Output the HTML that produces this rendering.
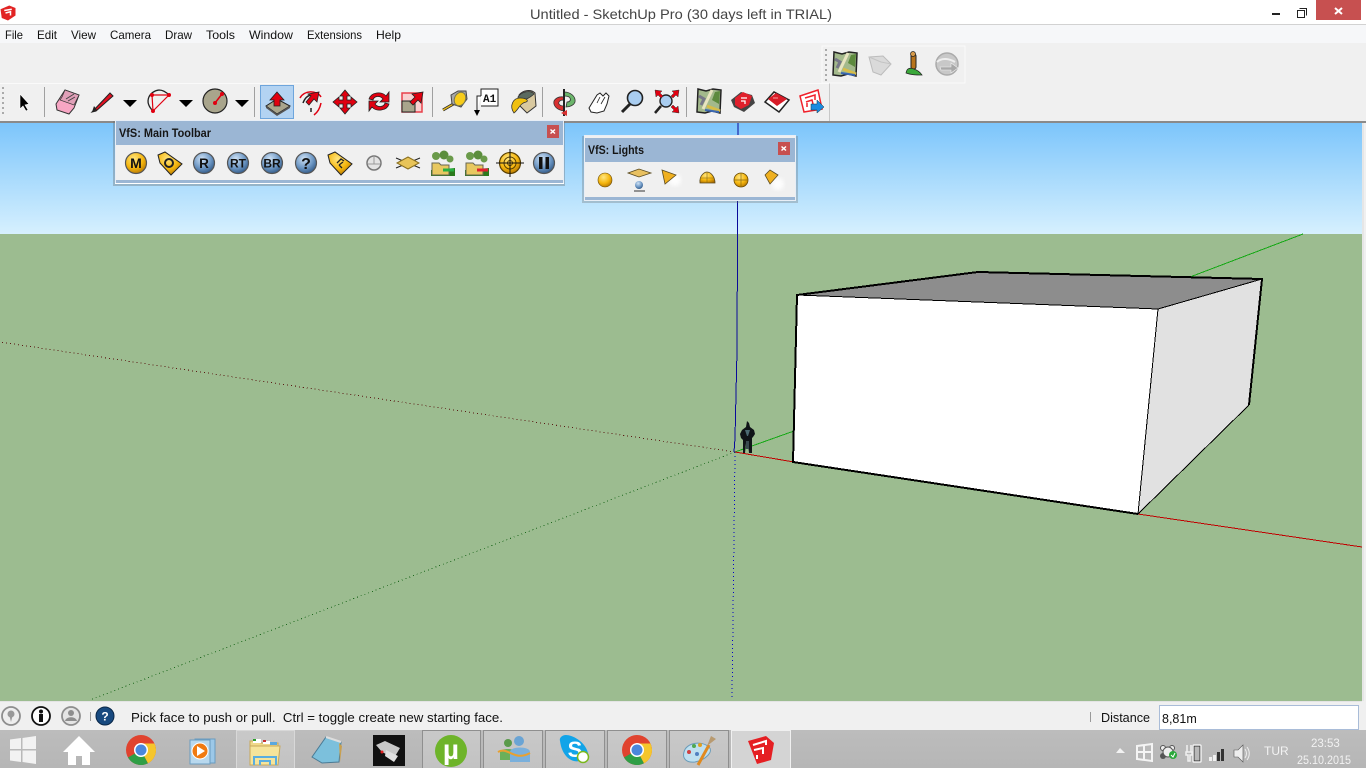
<!DOCTYPE html>
<html><head><meta charset="utf-8"><title>Untitled - SketchUp Pro</title>
<style>
html,body{margin:0;padding:0;width:1366px;height:768px;overflow:hidden;background:#f0f0f0}
svg{display:block;position:absolute;left:0;top:0}
text{font-family:"Liberation Sans",sans-serif}
</style></head><body>
<svg width="1366" height="768" viewBox="0 0 1366 768" xmlns="http://www.w3.org/2000/svg">
<defs>
<linearGradient id="sky" x1="0" y1="0" x2="0" y2="1"><stop offset="0" stop-color="#7cc5fb"/><stop offset="1" stop-color="#d6f0fe"/></linearGradient>
<radialGradient id="gold" cx=".4" cy=".3" r=".8"><stop offset="0" stop-color="#ffe680"/><stop offset=".55" stop-color="#f5b60e"/><stop offset="1" stop-color="#a96a00"/></radialGradient>
<radialGradient id="blue" cx=".4" cy=".3" r=".8"><stop offset="0" stop-color="#cfe2f5"/><stop offset=".55" stop-color="#6d97c4"/><stop offset="1" stop-color="#234a78"/></radialGradient>
<linearGradient id="tb" x1="0" y1="0" x2="0" y2="1"><stop offset="0" stop-color="#bcbcbc"/><stop offset="1" stop-color="#b6b6b6"/></linearGradient>
<linearGradient id="tbb" x1="0" y1="0" x2="0" y2="1"><stop offset="0" stop-color="#c9c9c9"/><stop offset="1" stop-color="#c2c2c2"/></linearGradient>
<filter id="bl"><feGaussianBlur stdDeviation="2"/></filter>
<g id="map"><path d="M-11-12L-3-10 4-12 12-11 11 12 3 10-4 12-12 11Z" fill="#a3b98c" stroke="#222" stroke-width="1.500"/><path d="M3-11L-6 8" stroke="#e8e4c0" stroke-width="3"/><path d="M-2 5L11 10" stroke="#d8bd48" stroke-width="3"/><path d="M-4 9L10 11" stroke="#3a67b2" stroke-width="2"/><path d="M-10-5L-5-2-8 4" stroke="#778" stroke-width="3" fill="none"/><path d="M6-9L11-10 10 3 3-1Z" fill="#5d8a3e"/></g>
</defs>

<!-- chrome -->
<rect width="1366" height="24" fill="#fff"/>
<rect y="24" width="1366" height="1" fill="#d2d2d2"/>
<rect y="25" width="1366" height="18" fill="#f6f7f9"/>
<rect y="43" width="1366" height="80" fill="#f0f0f0"/>
<rect y="83" width="830" height="1" fill="#fafafa"/>
<rect x="829" y="83" width="1" height="39" fill="#c8c8c8"/>
<rect x="822" y="46" width="143" height="37" fill="#f0f0f0" stroke="#fafafa"/>

<!-- sketchup title icon -->
<g transform="translate(8,13) scale(1.250)"><path d="M-6-3L1-6 6-4 6 2 0 6-5 4Z" fill="#e22424"/><path d="M-3-2L3-3M-2 0L2-1V2" stroke="#fff" stroke-width="1.200" fill="none"/></g>
<text x="530" y="19" font-size="14" fill="#444" textLength="302" lengthAdjust="spacingAndGlyphs">Untitled - SketchUp Pro (30 days left in TRIAL)</text>
<rect x="1272" y="13" width="8" height="2" fill="#222"/>
<path d="M1297.500 10.500h7v7h-7zM1299.500 8.500h7v7" fill="none" stroke="#222" stroke-width="1"/>
<rect x="1316" y="0" width="45" height="20" fill="#c75050"/>
<path d="M1335 8L1342 14M1342 8L1335 14" stroke="#fff" stroke-width="2"/>

<g font-size="12" fill="#111">
<text x="5" y="39" textLength="18" lengthAdjust="spacingAndGlyphs">File</text><text x="37" y="39" textLength="20" lengthAdjust="spacingAndGlyphs">Edit</text><text x="71" y="39" textLength="25" lengthAdjust="spacingAndGlyphs">View</text><text x="110" y="39" textLength="41" lengthAdjust="spacingAndGlyphs">Camera</text><text x="165" y="39" textLength="27" lengthAdjust="spacingAndGlyphs">Draw</text><text x="206" y="39" textLength="29" lengthAdjust="spacingAndGlyphs">Tools</text><text x="249" y="39" textLength="44" lengthAdjust="spacingAndGlyphs">Window</text><text x="307" y="39" textLength="55" lengthAdjust="spacingAndGlyphs">Extensions</text><text x="376" y="39" textLength="25" lengthAdjust="spacingAndGlyphs">Help</text>
</g>

<!-- viewport -->
<rect x="0" y="123" width="1362" height="111" fill="url(#sky)"/>
<rect x="0" y="234" width="1362" height="467" fill="#9cbc90"/>
<rect x="0" y="121" width="1366" height="2" fill="#8a8a8a"/>
<rect x="1362" y="123" width="2" height="578" fill="#e6e6e6"/>
<rect x="1364" y="123" width="2" height="578" fill="#f0f0f0"/>

<!-- axes -->
<g shape-rendering="crispEdges" fill="none">
<path d="M735 452L0 342" stroke="#5a1a14" stroke-width="1" stroke-dasharray="1 3"/>
<path d="M735 452L90 700" stroke="#1f6a1f" stroke-width="1" stroke-dasharray="1 3"/>
<path d="M735 452L732 700" stroke="#0000c8" stroke-width="1" stroke-dasharray="1 3"/>
<path d="M738 123L737 350 735 438 734 452" stroke="#0a0a9a" stroke-width="1"/>
<path d="M735 452L794 431" stroke="#14a814" stroke-width="1"/>
<path d="M1190 277L1303 234" stroke="#14a814" stroke-width="1"/>
<path d="M735 452L794 462" stroke="#c00000" stroke-width="1"/>
<path d="M1138 514L1362 547" stroke="#c00000" stroke-width="1"/>

<!-- box -->
<path d="M797 295L978 272 1262 279 1158 309Z" fill="#8d8d8d"/>
<path d="M797 295L1158 309 1138 514 793 462Z" fill="#fff"/>
<path d="M1158 309L1262 279 1249 405 1138 514Z" fill="#e1e1e1"/>
<path d="M797 295L1158 309M1158 309L1138 514M1158 309L1262 279M1138 514L1249 405" stroke="#000" stroke-width="1"/>
<path d="M1249 405L1262 279 978 272 797 295 793 462 1138 514" stroke="#000" stroke-width="2"/>
</g>

<!-- figure -->
<path d="M747 421L749 423 750 427 754 430 755 434 753 437 752 438 752 453 749 453 748 443 746 443 745 453 743 453 743 440 741 438 740 434 742 430 746 427Z" fill="#101418"/>
<path d="M745 430l5 0-2 6-1 0Z" fill="#4c6a72"/><path d="M746 441h3v8h-3z" fill="#3a4a50"/>

<!-- main toolbar row -->
<g fill="#aaa"><rect x="2" y="87" width="2" height="2"/><rect x="2" y="92" width="2" height="2"/><rect x="2" y="97" width="2" height="2"/><rect x="2" y="102" width="2" height="2"/><rect x="2" y="107" width="2" height="2"/><rect x="2" y="112" width="2" height="2"/></g>
<g fill="#a0a0a0"><rect x="44" y="87" width="1" height="30"/><rect x="254" y="87" width="1" height="30"/><rect x="432" y="87" width="1" height="30"/><rect x="542" y="87" width="1" height="30"/><rect x="686" y="87" width="1" height="30"/></g>
<rect x="260.500" y="85.500" width="33" height="33" fill="#b3d3f2" stroke="#6ea5dc"/>

<path d="M20 94L20 109 23 106 26 111 28 110 25 105 29 104Z" fill="#000" stroke="#fff" stroke-width=".6"/>
<!-- eraser -->
<path d="M56 104L65 90 79 95 74 108 69 114 57 110Z" fill="#f7a6c4" stroke="#333"/><path d="M62 97L65 90 79 95 74 105 60 100Z" fill="#e0a0b8" stroke="#333" stroke-width=".7"/><path d="M66 99L74 94M68 101L75 97" stroke="#444"/>
<!-- pencil -->
<path d="M92 112L110 93 113 96 96 111Z" fill="#e01020" stroke="#222" stroke-width="1"/><path d="M92 112L94 106 97 110Z" fill="#222"/>
<!-- dropdowns -->
<path d="M123 100h14l-7 7Z M179 100h14l-7 7Z M235 100h14l-7 7Z" fill="#000"/>
<!-- arc -->
<path d="M153 111C143 101 150 91 159 90 163 90 166 92 169 95" fill="none" stroke="#222" stroke-width="1.300"/>
<path d="M152 95L153 111M152 95L169 95M169 95L153 111" stroke="#e00010" stroke-width="1.200" fill="none"/>
<circle cx="152" cy="95" r="2" fill="#e00010"/><circle cx="169" cy="95" r="2" fill="#e00010"/><circle cx="153" cy="111" r="2" fill="#e00010"/>
<!-- circle -->
<circle cx="215" cy="101" r="12" fill="#a9a58c" stroke="#222" stroke-width="1.200"/><path d="M215 103L222 94" stroke="#e00010" stroke-width="1.500"/><circle cx="215" cy="103" r="2" fill="#e00010"/><circle cx="222" cy="94" r="2" fill="#e00010"/>
<!-- push pull -->
<path d="M266 106L277 99 290 106 277 114Z" fill="#a9a58c" stroke="#222"/><path d="M266 106V108L277 116 290 108V106L277 114Z" fill="#555"/>
<path d="M277 92L284 100H280V106H274V100H270Z" fill="#e00010" stroke="#222" stroke-width=".8"/>
<!-- follow me -->
<path d="M300 98C304 90 317 90 321 97M321 103C320 108 318 112 314 115" fill="none" stroke="#e00010" stroke-width="1.500"/>
<path d="M303 103C305 98 307 96 311 95M311 108V112" fill="none" stroke="#222" stroke-width="1.500"/>
<path d="M319 92L317 102 314 99 309 105 306 102 311 96 308 94Z" fill="#e00010" stroke="#222" stroke-width=".8"/>
<!-- move -->
<path d="M345 90L350 96H347V100H351V97L357 102 351 107V104H347V108H350L345 114 340 108H343V104H339V107L333 102 339 97V100H343V96H340Z" fill="#e00010" stroke="#222" stroke-width=".8"/>
<!-- rotate -->
<path d="M369 99C371 92 382 91 386 96L389 92V102H380L383 99C380 95 374 96 373 100ZM389 104C387 111 376 112 372 107L369 111V101H378L375 104C378 108 384 107 385 103Z" fill="#e00010" stroke="#222" stroke-width=".8"/>
<!-- scale -->
<rect x="402" y="93" width="20" height="19" fill="#f8d0d0" stroke="#e8404a" stroke-width="1.500"/><rect x="402" y="101" width="13" height="11" fill="#a9a58c" stroke="#222"/>
<path d="M423 92L421 103 418 100 413 105 410 102 415 97 412 94Z" fill="#e00010" stroke="#222" stroke-width=".8"/>
<!-- tape -->
<path d="M443 110L455 103" stroke="#222" stroke-width="3"/><path d="M443 110L455 103" stroke="#e4b820" stroke-width="1.500"/>
<path d="M452 104L451 95 458 91 466 91 467 99 461 107Z" fill="#a8a8a8" stroke="#444"/><ellipse cx="460" cy="99" rx="5.500" ry="7" fill="#f7cc1a" stroke="#775" transform="rotate(25 460 99)"/>
<!-- text -->
<path d="M481 96V89H498V106H481M481 96H477V111" fill="#fff" stroke="#222" stroke-width="1"/><path d="M474 110h6l-3 6Z" fill="#000"/>
<text x="483" y="102" font-size="11" fill="#111" font-weight="bold" style="font-family:'Liberation Mono',monospace">A1</text>
<!-- paint -->
<path d="M519 95C523 90 531 89 535 93L536 106 527 113 520 106Z" fill="#d9c9a0" stroke="#333"/><path d="M518 97C522 91 531 90 534 94 530 98 523 101 518 102Z" fill="#5a6a60" stroke="#333" stroke-width=".8"/>
<path d="M514 113C509 106 513 98 520 98 527 98 529 101 526 102 520 103 519 109 514 113Z" fill="#f0c010" stroke="#333" stroke-width=".8"/>
<!-- orbit -->
<path d="M564 97C558 96 555 99 554 101 553 106 557 110 564 111V106C560 106 558 104 559 102 560 100 562 100 564 100Z" fill="#d83030" stroke="#333" stroke-width=".8"/><path d="M564 92C570 92 576 96 575 102 574 105 570 107 566 107L567 102C570 102 571 100 570 98 569 96 566 96 564 96Z" fill="#6bb56b" stroke="#333" stroke-width=".8"/>
<path d="M564 89V116" stroke="#222" stroke-width="2"/><path d="M561 113l6-3v6Z" fill="#d83030"/>
<!-- hand -->
<path d="M589 108L597 95 600 93 603 96 606 93 609 96 607 104 604 111 597 113 591 112Z" fill="#fff" stroke="#222"/><path d="M600 97L597 103M605 97L601 104" stroke="#222" stroke-width=".8"/>
<!-- zoom -->
<circle cx="635" cy="98" r="7.500" fill="#a9cdf0" stroke="#222" stroke-width="1.600"/><path d="M630 104L622 112" stroke="#222" stroke-width="3"/>
<!-- zoom ext -->
<circle cx="666" cy="101" r="6" fill="#a9cdf0" stroke="#222" stroke-width="1.400"/><path d="M661 106L655 113" stroke="#222" stroke-width="2.500"/>
<path d="M655 90L662 91 660 93 663 96 661 98 658 95 656 97ZM679 90L678 97 676 95 673 98 671 96 674 93 672 91ZM679 113L672 112 674 110 671 107 673 105 676 108 678 106Z" fill="#e00010" stroke="#333" stroke-width=".5"/>
<!-- tray group -->
<use href="#map" x="709" y="101"/>
<g transform="translate(743,101)"><path d="M-12-1L-2-9 9-6 12 2 1 11-9 6Z" fill="#444"/><path d="M-8-3L0-9 9-5 6 4-2 8-8 4Z" fill="#e0202c"/><path d="M-2-3H4M-2 0H2V3" stroke="#fff" stroke-width="1.300" fill="none"/></g>
<g transform="translate(777,101)"><path d="M-12 1L-3-9 12-1 2 11Z" fill="#fff" stroke="#222" stroke-width="1.500"/><path d="M-9-2L-1-8 10-2 0 5Z" fill="#d81c28"/><path d="M-4-3L1-3" stroke="#f8a0a0"/></g>
<g transform="translate(811,101)"><path d="M-11-5L7-11 11 8-7 11Z" fill="#fff" stroke="#f0202a" stroke-width="1.500"/><path d="M-6-3L4-6V-1M-5 1L1-1 2 3M-4 6V2" stroke="#f0202a" stroke-width="1.500" fill="none"/><path d="M0 3H6V-1L13 6 6 12V9H0Z" fill="#1c8ce0" stroke="#134" stroke-width=".5"/></g>

<!-- top right toolbar -->
<g fill="#aaa"><rect x="825" y="49" width="2" height="2"/><rect x="825" y="54" width="2" height="2"/><rect x="825" y="59" width="2" height="2"/><rect x="825" y="64" width="2" height="2"/><rect x="825" y="69" width="2" height="2"/><rect x="825" y="74" width="2" height="2"/><rect x="825" y="79" width="2" height="2"/></g>
<use href="#map" x="845" y="64"/>
<path d="M869 57L883 56 891 64 881 75 873 72Z" fill="#dadada" stroke="#bcbcbc"/><path d="M869 57L881 62 891 64" stroke="#c4c4c4" fill="none"/>
<g><rect x="911" y="54" width="5" height="15" rx="2" fill="#b8741c" stroke="#222"/><circle cx="913" cy="54" r="2.500" fill="#d69a4a" stroke="#222" stroke-width=".7"/><path d="M906 73C907 67 911 68 914 69 917 70 920 72 922 75 916 75 911 75 906 73Z" fill="#3aa83a" stroke="#222" stroke-width=".7"/></g>
<circle cx="947" cy="64" r="11" fill="#c8c8c8" stroke="#aaa" stroke-width="1.500"/><path d="M937 62C942 57 950 59 955 62" stroke="#eee" stroke-width="2" fill="none"/><path d="M940 67H951V63L958 68 951 73V70H941Z" fill="#a8a8a8" stroke="#eee" stroke-width=".6"/>

<!-- VfS Main -->
<rect x="113" y="121" width="452" height="65" fill="#666" opacity=".35"/>
<rect x="115" y="120" width="449" height="64" fill="#f0f0f0"/>
<rect x="116" y="120" width="447" height="25" fill="#9bb6d4"/>
<rect x="115.500" y="120.500" width="448" height="63" fill="none" stroke="#e8eef6"/>
<rect x="116" y="180" width="447" height="3" fill="#9bb6d4"/>
<rect x="115" y="183" width="449" height="1" fill="#fff"/>
<text x="119" y="137" font-size="11.500" font-weight="bold" fill="#151515" textLength="92" lengthAdjust="spacingAndGlyphs">VfS: Main Toolbar</text>
<rect x="547" y="125" width="12" height="13" fill="#c75050"/><path d="M550.500 129.500L555 133.500M555 129.500L550.500 133.500" stroke="#fff" stroke-width="1.500"/>

<g stroke="#555" stroke-width="1.200">
<circle cx="136" cy="163" r="10.500" fill="url(#gold)"/>
<circle cx="204" cy="163" r="10.500" fill="url(#blue)"/>
<circle cx="238" cy="163" r="10.500" fill="url(#blue)"/>
<circle cx="272" cy="163" r="10.500" fill="url(#blue)"/>
<circle cx="306" cy="163" r="10.500" fill="url(#blue)"/>
<circle cx="544" cy="163" r="10.500" fill="url(#blue)"/>
</g>
<g font-weight="bold" fill="#111" text-anchor="middle">
<text x="136" y="168" font-size="14">M</text>
<text x="204" y="168" font-size="13.500">R</text>
<text x="238" y="167.500" font-size="12">RT</text>
<text x="272" y="167.500" font-size="12">BR</text>
<text x="306" y="169" font-size="16">?</text>
</g>
<g transform="translate(170,163)"><path d="M-12-8L-5-11 12 1 1 12-10 0Z" fill="url(#gold)" stroke="#222"/><circle cx="-1" cy="0" r="4" fill="none" stroke="#222" stroke-width="2"/></g>
<g transform="translate(340,163)"><path d="M-12-8L-5-11 12 1 1 12-10 0Z" fill="url(#gold)" stroke="#222"/><path d="M-3 0L1-4 4-2M-1 2L2 5M-1 2L3-1" stroke="#222" stroke-width="1.300" fill="none"/></g>
<circle cx="374" cy="163" r="7" fill="#e4e4e4" stroke="#777" stroke-width="1.500"/><path d="M368 164H380M374 156V164" stroke="#9a9a9a"/>
<g transform="translate(408,163)"><path d="M-12-5L12 5M-12 5L12-5" stroke="#222" stroke-width="1"/><path d="M-11 0L0-6 11 0 0 6Z" fill="#e8c458" stroke="#8a7020"/></g>
<g><path d="M431 176H455V168L431 170Z" fill="#2c7a1c"/><circle cx="436" cy="156" r="4" fill="#6a9a4a"/><circle cx="444" cy="155" r="4.500" fill="#5b8d3c"/><circle cx="450" cy="159" r="3.500" fill="#6a9a4a"/><path d="M432 175V163H439L441 165H449V175Z" fill="#e8c860" stroke="#665"/><path d="M443 170H454" stroke="#28b040" stroke-width="3"/></g>
<path d="M465 176H489V168L465 170Z" fill="#2c7a1c"/><circle cx="470" cy="156" r="4" fill="#6a9a4a"/><circle cx="478" cy="155" r="4.500" fill="#5b8d3c"/><circle cx="484" cy="159" r="3.500" fill="#6a9a4a"/><path d="M466 175V163H473L475 165H483V175Z" fill="#e8c860" stroke="#665"/><path d="M477 170H488" stroke="#e02030" stroke-width="3"/>
<circle cx="510" cy="163" r="10.500" fill="url(#gold)" stroke="#5a4000" stroke-width="1.200"/><circle cx="510" cy="163" r="6" fill="none" stroke="#5a4000"/><circle cx="510" cy="163" r="2.500" fill="none" stroke="#5a4000"/><path d="M496 163H524M510 149V177" stroke="#111"/>
<rect x="539" y="157" width="3.500" height="12" fill="#111"/><rect x="545.500" y="157" width="3.500" height="12" fill="#111"/>

<!-- VfS Lights -->
<rect x="582" y="136" width="216" height="67" fill="#666" opacity=".3"/>
<rect x="584" y="135" width="212" height="66" fill="#f0f0f0"/>
<rect x="585" y="138" width="210" height="24" fill="#9bb6d4"/>
<rect x="584.500" y="135.500" width="211" height="65" fill="none" stroke="#e8eef6" stroke-width="1"/>
<rect x="585" y="197" width="210" height="3" fill="#9bb6d4"/>
<text x="588" y="154" font-size="11.500" font-weight="bold" fill="#151515" textLength="56" lengthAdjust="spacingAndGlyphs">VfS: Lights</text>
<rect x="778" y="142" width="12" height="13" fill="#c75050"/><path d="M781.500 146.500L786 150.500M786 146.500L781.500 150.500" stroke="#fff" stroke-width="1.500"/>
<circle cx="605" cy="180" r="7" fill="url(#gold)" stroke="#6a4a00" stroke-width=".6"/>
<path d="M628 173L639 169 651 173 639 177Z" fill="#e8c060" stroke="#5a4a20" stroke-width=".8"/><circle cx="639" cy="185" r="4" fill="url(#blue)"/><path d="M634 191H645" stroke="#333"/>
<circle cx="675" cy="180" r="6" fill="#fff" opacity=".9" filter="url(#bl)"/><path d="M662 170L676 175 665 184Z" fill="#f0b020" stroke="#5a4a20" stroke-width=".8"/>
<path d="M700 183C699 175 705 172 707 172 711 172 715 177 715 183Z" fill="url(#gold)" stroke="#5a4a20" stroke-width=".8"/><path d="M707 172V183M701 178H714" stroke="#8a6a10" stroke-width=".6"/>
<circle cx="741" cy="180" r="7" fill="url(#gold)" stroke="#6a4a00" stroke-width=".8"/><path d="M741 173V187M734 180H748" stroke="#8a6a10" stroke-width=".7"/>
<circle cx="778" cy="184" r="6" fill="#fff" opacity=".9" filter="url(#bl)"/><path d="M765 175L770 170 778 175 770 184Z" fill="#efb020" stroke="#5a4a20" stroke-width=".8"/>

<!-- status bar -->
<rect y="701" width="1366" height="29" fill="#f0f0f0"/>
<rect y="701" width="1362" height="1" fill="#e4e4e4"/>
<circle cx="11" cy="716" r="9" fill="#eee" stroke="#8e8e8e" stroke-width="1.800"/><circle cx="11" cy="714" r="3.500" fill="#999"/><path d="M9.500 716H12.500L11 722Z" fill="#999"/>
<circle cx="41" cy="716" r="9" fill="#fff" stroke="#111" stroke-width="1.800"/><circle cx="41" cy="711.500" r="2" fill="#111"/><rect x="39" y="714" width="4" height="8" fill="#111"/>
<circle cx="71" cy="716" r="9" fill="#e4e4e4" stroke="#8e8e8e" stroke-width="1.800"/><circle cx="71" cy="713" r="3" fill="#8e8e8e"/><path d="M65 721C66 716 76 716 77 721Z" fill="#8e8e8e"/>
<rect x="90" y="712" width="1" height="9" fill="#999"/>
<circle cx="105" cy="716" r="9" fill="#17497f" stroke="#0a2747"/>
<text x="105" y="720.500" text-anchor="middle" font-size="12" font-weight="bold" fill="#fff">?</text>
<text x="131" y="722" font-size="12.500" fill="#111" textLength="372" lengthAdjust="spacingAndGlyphs">Pick face to push or pull.&#160; Ctrl = toggle create new starting face.</text>
<rect x="1090" y="712" width="1" height="10" fill="#999"/>
<text x="1101" y="722" font-size="12.500" fill="#111" textLength="49" lengthAdjust="spacingAndGlyphs">Distance</text>
<rect x="1159.500" y="705.500" width="199" height="24" fill="#fff" stroke="#a9bcd8"/>
<text x="1162" y="723" font-size="12.500" fill="#111">8,81m</text>
<rect x="1362" y="701" width="4" height="29" fill="#f0f0f0"/>

<!-- taskbar -->
<rect y="730" width="1366" height="38" fill="url(#tb)"/>
<g fill="url(#tbb)" stroke="#8f8f8f" stroke-width="1">
<rect x="236.500" y="730.500" width="58" height="40" stroke="#d8d8d8"/>
<rect x="422.500" y="730.500" width="58" height="40"/>
<rect x="483.500" y="730.500" width="59" height="40"/>
<rect x="545.500" y="730.500" width="59" height="40"/>
<rect x="607.500" y="730.500" width="59" height="40"/>
<rect x="669.500" y="730.500" width="59" height="40"/>
<rect x="731.500" y="730.500" width="59" height="40" fill="#d4d4d4" stroke="#f0f0f0"/>
</g>
<path d="M10 739.500L21 738V749H10ZM22.500 738L36 736V749H22.500ZM10 750.500H21V762L10 760.500ZM22.500 750.500H36V764L22.500 762Z" fill="#f2f2f2"/>
<path d="M79 736L95 752H90V765H82V756H76V765H68V752H63Z" fill="#fff"/>
<g><circle cx="141" cy="750" r="15" fill="#e0432f"/><path d="M141 750L128 757.500A15 15 0 0 0 148 763.300Z" fill="#2f9e46"/><path d="M141 750L148 763.300A15 15 0 0 0 154.500 743.500L141 743.500Z" fill="#f5c62c"/><circle cx="141" cy="750" r="7" fill="#fff"/><circle cx="141" cy="750" r="5.500" fill="#4a87dc"/></g>
<g><rect x="195" y="739" width="20" height="24" fill="#9cc8e8" stroke="#6a9cc0"/><rect x="190" y="740" width="20" height="24" fill="#b8d8ee" stroke="#6a9cc0"/><circle cx="200" cy="751" r="8" fill="#f07a12" stroke="#fff" stroke-width="1"/><path d="M197 746L205 751 197 756Z" fill="#fff"/></g>
<g><path d="M250 745V741H258L261 743H278V765H250Z" fill="#f0d98a" stroke="#c8a85a"/><rect x="253" y="739" width="8" height="4" fill="#fff"/><rect x="253" y="739" width="3" height="2" fill="#2ca02c"/><rect x="263" y="741" width="7" height="3" fill="#fff"/><rect x="263" y="740" width="3" height="2" fill="#c83030"/><rect x="270" y="742" width="7" height="3" fill="#5aa8e0"/><path d="M250 746H280L278 765H250Z" fill="#f6e49a" stroke="#c8a85a"/><path d="M254 765V757H276V765M260 765V761H270V765" fill="none" stroke="#5aaee0" stroke-width="2"/></g>
<g><path d="M312 757L326 737 341 742 339 762 322 763Z" fill="#7cc0dc" stroke="#4a7a94"/><path d="M339 743L342 746 340 762Z" fill="#c8a050"/><path d="M326 737L341 742" stroke="#ddd" stroke-width="2"/></g>
<g><rect x="373" y="735" width="32" height="31" fill="#111"/><path d="M376 745L385 741 400 748 394 758 382 752Z" fill="#c8c8c8"/><path d="M386 750L398 756 394 762 385 756Z" fill="#e0e0e0"/><circle cx="382" cy="752" r="1.500" fill="#e02020"/></g>
<g><circle cx="451" cy="751" r="16" fill="#6eb42a"/><text x="451" y="759" text-anchor="middle" font-size="28" font-weight="bold" fill="#fff">µ</text></g>
<g><circle cx="508" cy="743" r="4" fill="#5a9a4a"/><path d="M500 760V752C500 748 516 748 516 752V760Z" fill="#6ab05a"/><circle cx="519" cy="741" r="5" fill="#6aa4d4"/><path d="M510 762V752C510 746 530 746 530 752V762Z" fill="#7ab0dc"/><path d="M498 752C508 746 514 762 530 753" stroke="#e8a030" stroke-width="2" fill="none"/></g>
<g><path d="M560 741C559 738 562 735 566 735 572 735 585 741 588 753 589 758 585 763 580 761 571 763 562 756 560 741Z" fill="#12a4e8"/><text x="575" y="757" text-anchor="middle" font-size="22" font-weight="bold" fill="#fff">S</text><circle cx="583" cy="757" r="5.500" fill="#fff" stroke="#7ab81c" stroke-width="1.500"/></g>
<g transform="translate(496,0)"><circle cx="141" cy="750" r="15" fill="#e0432f"/><path d="M141 750L128 757.500A15 15 0 0 0 148 763.300Z" fill="#2f9e46"/><path d="M141 750L148 763.300A15 15 0 0 0 154.500 743.500L141 743.500Z" fill="#f5c62c"/><circle cx="141" cy="750" r="7" fill="#fff"/><circle cx="141" cy="750" r="5.500" fill="#4a87dc"/></g>
<g><path d="M684 752C686 743 701 740 709 747 714 752 705 760 695 762 687 763 682 759 684 752Z" fill="#bfe0f0" stroke="#6a9cba"/><circle cx="689" cy="752" r="2" fill="#d04040"/><circle cx="694" cy="746" r="2" fill="#50a850"/><circle cx="700" cy="745" r="2" fill="#e0a020"/><circle cx="697" cy="754" r="2" fill="#5080c0"/><path d="M698 765L709 745" stroke="#e08a20" stroke-width="3"/><path d="M707 746L711 736 716 739Z" fill="#b89a70"/></g>
<g><path d="M748 741L766 736 774 743 771 760 757 764Z" fill="#e51f23"/><path d="M753 745L766 741V745M754 750L763 748V754M757 755V759" stroke="#fff" stroke-width="2" fill="none"/></g>

<!-- tray -->
<path d="M1116 753L1120 748 1125 753Z" fill="#f2f2f2"/>
<path d="M1137 746L1152 744V761L1137 759ZM1144 745V760M1137 752H1152" fill="none" stroke="#f4f4f4" stroke-width="2"/>
<g><circle cx="1163" cy="748" r="3" fill="#555"/><circle cx="1172" cy="748" r="3" fill="#555"/><circle cx="1163" cy="756" r="3" fill="#555"/><circle cx="1172" cy="748" r="2" fill="#eee"/><circle cx="1163" cy="748" r="2" fill="#eee"/><circle cx="1168" cy="752" r="5" fill="#eee" stroke="#555"/><circle cx="1173" cy="755" r="4" fill="#2aa83a"/><path d="M1171 755L1173 757 1175 753" stroke="#fff" fill="none"/></g>
<g fill="none" stroke="#f0f0f0" stroke-width="1.500"><path d="M1187 745V752M1191 745V752M1186 752H1192V755H1190V761H1188V755H1186Z"/><rect x="1194" y="746" width="6" height="15" stroke="#333" stroke-width="1"/><rect x="1193" y="745" width="8" height="17" rx="1"/></g>
<g fill="#333"><rect x="1209" y="757" width="3" height="4" fill="#f0f0f0"/><rect x="1213" y="755" width="3" height="6" fill="#f0f0f0"/><rect x="1217" y="752" width="3" height="9"/><rect x="1221" y="749" width="3" height="12"/></g>
<path d="M1234 750H1238L1243 745V762L1238 757H1234Z" fill="#eee" stroke="#555" stroke-width=".6"/><path d="M1245 749C1247 752 1247 755 1245 758M1247 747C1250 751 1250 756 1247 760" stroke="#eee" fill="none"/>
<text x="1264" y="755" font-size="12" fill="#f2f2f2">TUR</text>
<text x="1311" y="747" font-size="11.500" fill="#f2f2f2">23:53</text>
<text x="1297" y="764" font-size="11.500" fill="#f2f2f2" textLength="54" lengthAdjust="spacingAndGlyphs">25.10.2015</text>
</svg>
</body></html>
